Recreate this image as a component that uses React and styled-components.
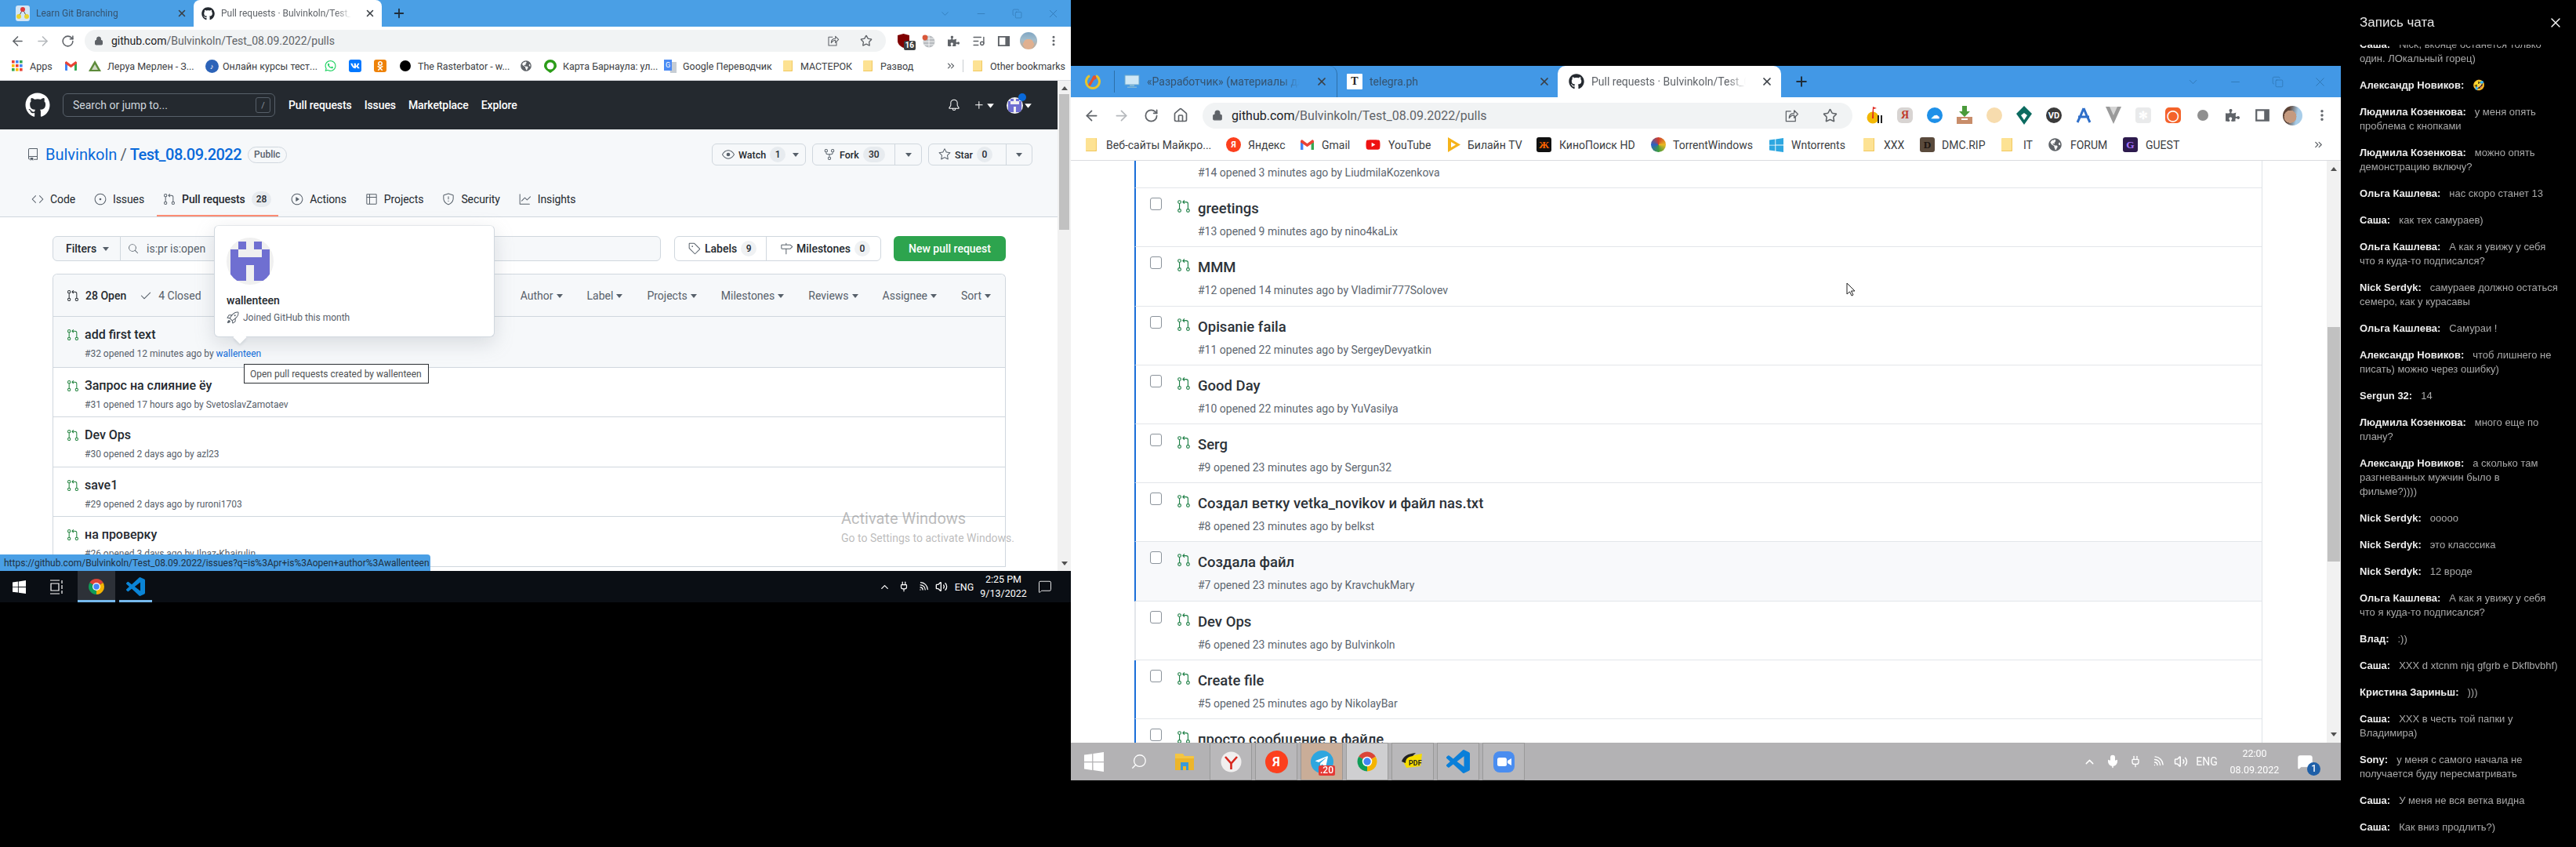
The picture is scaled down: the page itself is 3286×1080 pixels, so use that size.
import React from "react";
import styled, { createGlobalStyle } from "styled-components";
import {
  GoGitPullRequest, GoCode, GoIssueOpened, GoPlay, GoTable, GoShield, GoGraph, GoEye,
  GoRepoForked, GoStar, GoRepo, GoBell, GoPlus, GoSearch, GoTag, GoMilestone, GoCheck,
  GoRocket,
} from "react-icons/go";
import { FaGithub as GoMarkGithub, FaWhatsapp, FaVk, FaOdnoklassniki, FaYoutube, FaTelegramPlane, FaPuzzlePiece, FaGlobeAmericas } from "react-icons/fa";
import {
  ArrowLeft, ArrowRight, RotateCw, House, Lock, Star, EllipsisVertical, X, Plus, Minus, ChevronDown,
  ChevronUp, Copy, Wifi, Volume2, Mic, Plug, MessageSquare, Search, ListMusic, ChevronsRight,
} from "lucide-react";

const SANS = `Roboto, "Liberation Sans", sans-serif`;

const Global = createGlobalStyle`
  html, body { margin: 0; padding: 0; background: #000; }
  body { font-family: ${SANS}; width: 3286px; height: 1080px; overflow: hidden; }
  * { box-sizing: border-box; }
`;

const GoTriangleDown = ({ size = 12, color = "currentColor", style }) => (
  <svg width={size} height={size} viewBox="0 0 12 12" style={style}><path d="M2 4h8L6 9z" fill={color} /></svg>
);

/* ---------- page shell ---------- */
const Screen = styled.div`
  display: flex; width: 3286px; height: 1080px; background: #000; overflow: hidden;
`;
const LeftDesktop = styled.div`
  width: 1366px; height: 768px; display: flex; flex-direction: column; flex: none;
`;
const RightColumn = styled.div`
  width: 1620px; flex: none; padding-top: 84px; height: 995px;
`;
const RightDesktop = styled.div`
  height: 911px; display: flex; flex-direction: column; filter: blur(0.45px);
`;

/* ---------- chrome ---------- */
const TabStrip = styled.div`
  display: flex; align-items: stretch; flex: none; height: ${p => p.$big ? 40 : 34}px;
  background: ${p => p.$big ? "#4298e6" : "#4a9fe5"}; padding-left: ${p => p.$pad || 0}px;
`;
const Tab = styled.div`
  display: flex; align-items: center; flex: none; width: ${p => p.$w}px; padding-left: ${p => p.$pl}px;
  gap: ${p => p.$gap}px; font-size: ${p => p.$big ? 14 : 12}px; color: ${p => p.$active ? "#5f6368" : "#35536f"};
  background: ${p => p.$active ? "#fff" : "transparent"};
  border-radius: ${p => p.$big ? 10 : 8}px ${p => p.$big ? 10 : 8}px 0 0;
  border-right: ${p => p.$sep ? "1px solid #2d6fa8" : "none"};
`;
const TabTitle = styled.span`
  flex: 1; min-width: 0; white-space: nowrap; overflow: hidden;
  -webkit-mask-image: linear-gradient(90deg, #000 88%, transparent);
  mask-image: linear-gradient(90deg, #000 88%, transparent);
`;
const TabClose = styled.span`
  flex: none; width: ${p => p.$w}px; display: flex; justify-content: center; color: #3a3f45;
`;
const NewTab = styled.span`
  flex: none; width: ${p => p.$w}px; margin-left: ${p => p.$ml}px; display: flex; align-items: center; justify-content: center; color: #1f2d3a;
`;
const AppMark = styled.span`
  flex: none; width: 56px; display: flex; align-items: center; justify-content: center; border-right: 1px solid #2d6fa8; margin: 6px 0;
`;
const Controls = styled.div`
  margin-left: auto; display: flex;
`;
const Control = styled.span`
  width: ${p => p.$w}px; display: flex; align-items: center; justify-content: center; color: #2a6ea8;
`;
const Toolbar = styled.div`
  display: flex; align-items: center; flex: none; background: #fff; height: ${p => p.$big ? 41 : 32}px;
  padding-left: ${p => p.$big ? 7 : 6}px; padding-top: ${p => p.$big ? 5 : 4}px;
`;
const ToolButton = styled.span`
  flex: none; width: ${p => p.$big ? 38 : 32}px; height: 100%; display: flex; align-items: center; justify-content: center;
  color: ${p => p.$dim ? "#b5b8bc" : "#5f6368"}; position: relative;
`;
const Omnibox = styled.div`
  flex: none; width: ${p => p.$w}px; margin: 0 ${p => p.$mr}px 0 ${p => p.$ml}px; height: ${p => p.$big ? 33 : 28}px;
  border-radius: 17px; background: #f1f3f4; display: flex; align-items: center; padding: 0 ${p => p.$big ? 10 : 9}px 0 ${p => p.$big ? 12 : 12}px;
  color: #5f6368; font-size: ${p => p.$big ? 16 : 14}px; gap: ${p => p.$big ? 11 : 10}px;
`;
const Url = styled.span`
  flex: 1; white-space: nowrap; color: #5f6368; b { font-weight: 400; color: #202124; }
`;
const OmniTool = styled.span`
  flex: none; width: ${p => p.$big ? 38 : 32}px; display: flex; justify-content: center; color: #5f6368;
`;
const Bookmarks = styled.div`
  display: flex; align-items: center; flex: none; background: #fff; height: ${p => p.$big ? 40 : 37}px;
  border-bottom: 1px solid #dadce0; font-size: ${p => p.$big ? 14 : 12.5}px; color: #3c4043; white-space: nowrap;
`;
const Bookmark = styled.div`
  display: flex; align-items: center; flex: none; margin-left: ${p => p.$ml}px;
`;
const BookmarkIcon = styled.span`
  flex: none; width: ${p => p.$w}px; display: flex; align-items: center; justify-content: center;
`;
const BookmarkLabel = styled.span`
  flex: none; width: ${p => p.$w}px; margin-left: ${p => p.$ml}px; overflow: visible;
`;
const Folder = styled.span`
  display: block; width: ${p => p.$big ? 14 : 12}px; height: ${p => p.$big ? 17 : 14}px; background: #fde293;
  border-radius: 1px; box-shadow: inset -1px -1px 0 #f1c85f;
`;
const BarSep = styled.span`
  flex: none; width: 1px; height: 16px; background: #c8ccd0; margin-left: 8px;
`;
const Badge16 = styled.span`
  position: absolute; right: 0; bottom: 2px; background: #3c4043; color: #fff; font-size: 10px; font-weight: 700; padding: 0 2px; border-radius: 2px; line-height: 12px;
`;
const Dot = styled.span`
  width: ${p => p.$s}px; height: ${p => p.$s}px; border-radius: 50%; background: ${p => p.$c};
  display: flex; align-items: center; justify-content: center; color: #fff; font-size: ${p => p.$s * .55}px; font-weight: 700;
`;
const SquareMark = styled.span`
  display: flex; align-items: center; justify-content: center; width: ${p => p.$s}px; height: ${p => p.$s}px; border-radius: ${p => p.$r || 3}px;
  background: ${p => p.$c}; color: ${p => p.$fg || "#fff"}; font-size: ${p => p.$s * .7}px; font-weight: 700; font-family: "Liberation Serif", serif;
`;
const FaceAvatar = styled.span`
  display: block; width: ${p => p.$s}px; height: ${p => p.$s}px; border-radius: 50%;
  background: ${p => p.$anime
    ? "radial-gradient(circle at 50% 70%, #e0b090 0 35%, transparent 36%), linear-gradient(#7fa6c4, #a3bccb 45%, #c9a78a)"
    : "radial-gradient(circle at 38% 55%, #c59a7f 0 38%, transparent 39%), linear-gradient(100deg, #5c4336 30%, #a8cde9 70%)"};
`;

/* ---------- left viewport ---------- */
const Viewport = styled.div`
  flex: 1; min-height: 0; display: flex; position: relative; background: #fff; overflow: hidden;
`;
const Doc = styled.div`
  flex: 1; min-width: 0; overflow: hidden; color: #24292f;
`;
const Scrollbar = styled.div`
  flex: none; width: ${p => p.$w}px; background: #f1f1f1; display: flex; flex-direction: column; align-items: center;
  padding-top: ${p => p.$gap}px; position: relative;
`;
const ScrollThumb = styled.div`
  width: ${p => p.$w}px; height: ${p => p.$h}px; background: #c1c1c1; margin-top: ${p => p.$top}px;
`;
const ScrollUp = styled.span`
  position: absolute; top: ${p => p.$t}px; border-left: 4px solid transparent; border-right: 4px solid transparent; border-bottom: 5px solid #505050;
`;
const ScrollDown = styled.span`
  position: absolute; bottom: ${p => p.$b}px; border-left: 4px solid transparent; border-right: 4px solid transparent; border-top: 5px solid #505050;
`;
const GhHeader = styled.header`
  height: 62px; background: #24292f; display: flex; align-items: center; padding: 0 31px 0 32px; color: #fff; flex: none;
`;
const GhSearch = styled.div`
  width: 271px; height: 30px; margin-left: 16px; border: 1px solid #57606a; border-radius: 6px; display: flex; align-items: center;
  padding: 0 5px 0 12px; font-size: 14px; color: #d0d7de; justify-content: space-between;
`;
const Slash = styled.span`
  width: 19px; height: 20px; border: 1px solid #57606a; border-radius: 3px; display: flex; align-items: center; justify-content: center; font-size: 11px; color: #8c959f;
`;
const GhNav = styled.nav`
  display: flex; gap: 16px; margin-left: 17px; font-size: 14px; font-weight: 500; color: #fff; letter-spacing: -0.1px;
`;
const GhRight = styled.div`
  margin-left: auto; display: flex; align-items: center;
`;
const GhAvatarWrap = styled.span`
  position: relative; margin-left: 14px; display: flex; align-items: center; gap: 0;
`;
const Notify = styled.span`
  position: absolute; left: 15px; top: -5px; width: 10px; height: 10px; border-radius: 50%; background: #0969da;
`;
const RepoHead = styled.div`
  height: 112px; background: #f6f8fa; border-bottom: 1px solid #d0d7de; padding: 18px 32px 0 34px; display: flex; flex-direction: column; justify-content: space-between;
`;
const RepoTop = styled.div`
  display: flex; align-items: center; height: 28px;
`;
const RepoName = styled.div`
  display: flex; align-items: center; font-size: 20px; color: #0969da; margin-left: 8px; gap: 4px;
  b { font-weight: 500; letter-spacing: -0.5px; } i { font-style: normal; color: #57606a; }
`;
const PublicPill = styled.span`
  margin-left: 8px; height: 21px; padding: 0 7px; border: 1px solid #d0d7de; border-radius: 11px; font-size: 12px; color: #57606a; display: flex; align-items: center; font-weight: 500;
`;
const RepoActions = styled.div`
  margin-left: auto; display: flex; gap: 8px;
`;
const ActionButton = styled.div`
  display: flex; align-items: center; width: ${p => p.$w}px; height: 28px; border: 1px solid #d0d7de; border-radius: 6px; background: #f6f8fa;
  font-size: 12.5px; font-weight: 500; color: #24292f; overflow: hidden;
`;
const ActionMain = styled.span`
  flex: 1; display: flex; align-items: center; gap: 5px; padding-left: ${p => p.$pl}px; height: 100%;
`;
const ActionCaret = styled.span`
  flex: none; width: ${p => p.$w}px; height: 100%; display: flex; align-items: center; justify-content: center; border-left: ${p => p.$line ? "1px solid #d0d7de" : "none"}; color: #57606a;
`;
const Counter = styled.span`
  display: inline-flex; align-items: center; justify-content: center; min-width: ${p => p.$w || 20}px; height: 20px; padding: 0 6px; border-radius: 10px;
  background: ${p => p.$bg || "rgba(175,184,193,.2)"}; font-size: 12px; font-weight: 500; color: #24292f;
`;
const RepoTabs = styled.div`
  display: flex; gap: 8px; margin-left: -2px; height: 47px;
`;
const RepoTab = styled.div`
  display: flex; align-items: center; gap: 8px; padding: 4px ${p => p.$active ? 9 : 8}px 0 8px; font-size: 14px; color: #24292f; height: 47px;
  font-weight: ${p => p.$active ? 500 : 400}; margin-bottom: -1px; letter-spacing: -0.1px;
  border-bottom: 2px solid ${p => p.$active ? "#fd8c73" : "transparent"};
  svg { color: #57606a; }
`;
const Main = styled.div`
  padding: 24px 66px 0 67px;
`;
const FilterRow = styled.div`
  display: flex; height: 32px;
`;
const FilterBtn = styled.div`
  flex: none; width: 87px; display: flex; align-items: center; gap: 6px; padding-left: 16px; background: #f6f8fa; border: 1px solid #d0d7de; border-radius: 6px 0 0 6px;
  font-size: 14px; font-weight: 500;
`;
const FilterInput = styled.div`
  flex: none; width: 690px; margin-left: -1px; display: flex; align-items: center; gap: 10px; padding-left: 9px; background: #f6f8fa; border: 1px solid #d0d7de; border-radius: 0 6px 6px 0;
  font-size: 14px; color: #57606a;
`;
const LabelGroup = styled.div`
  flex: none; width: 264px; margin-left: 17px; display: flex; border: 1px solid #d0d7de; border-radius: 6px; font-size: 14px; font-weight: 500;
`;
const LabelPart = styled.div`
  display: flex; align-items: center; gap: 5px; padding-left: ${p => p.$pl}px; width: ${p => p.$w}px; border-left: ${p => p.$line ? "1px solid #d0d7de" : "none"};
  svg { color: #57606a; }
`;
const GreenButton = styled.div`
  flex: none; width: 143px; margin-left: 16px; background: #2da44e; border-radius: 6px; color: #fff; font-size: 14px; font-weight: 500; display: flex; align-items: center; justify-content: center;
`;
const IssueBox = styled.div`
  margin-top: 16px; border: 1px solid #d0d7de; border-bottom: 0; border-radius: 6px 6px 0 0;
`;
const IssueHead = styled.div`
  height: 54px; background: #f6f8fa; border-bottom: 1px solid #d0d7de; display: flex; align-items: center; padding: 0 16px 0 17px; font-size: 14px; border-radius: 6px 6px 0 0;
`;
const StateLink = styled.span`
  display: flex; align-items: center; gap: 8px; margin-right: 17px; font-weight: ${p => p.$on ? 500 : 400}; color: ${p => p.$on ? "#24292f" : "#57606a"};
`;
const HeadFilters = styled.div`
  margin-left: auto; display: flex; gap: 29px; color: #57606a; font-size: 14px;
`;
const HeadFilter = styled.span`
  display: flex; align-items: center; gap: 2px;
`;
const Row = styled.div`
  height: ${p => p.$h || 64}px; background: ${p => p.$hover ? "#f6f8fa" : "#fff"}; border-bottom: 1px solid #d0d7de; display: flex; padding: 12px 0 0 17px; gap: 7px;
  svg { color: #1a7f37; margin-top: 3px; flex: none; }
`;
const RowBody = styled.div`
  display: flex; flex-direction: column;
`;
const RowTitle = styled.div`
  font-size: 16px; font-weight: 500; line-height: 22px; color: #24292f;
`;
const RowMeta = styled.div`
  font-size: 12px; line-height: 16px; margin-top: 5px; color: #57606a; a { color: #0969da; }
`;

/* overlays */
const HoverCard = styled.div`
  position: absolute; left: 273px; top: 184px; width: 358px; height: 143px; background: #fff; border: 1px solid #d0d7de; border-top-color: #e4e7ea; border-radius: 6px;
  box-shadow: 0 8px 24px rgba(140,149,159,.28); padding: 15px 15px;
  &::after { content: ""; position: absolute; left: 26px; bottom: -7px; width: 12px; height: 12px; background: #fff; transform: rotate(45deg); box-shadow: 2px 2px 3px rgba(140,149,159,.2); }
`;
const Identicon = styled.div`
  width: 60px; height: 60px; border-radius: 50%; background: #f0f0f0; overflow: hidden; display: flex; align-items: center; justify-content: center;
`;
const CardName = styled.div`
  font-size: 14px; font-weight: 500; margin-top: 12px; color: #24292f; line-height: 16px;
`;
const CardLine = styled.div`
  display: flex; align-items: center; gap: 5px; font-size: 12px; color: #57606a; margin-top: 6px; svg { color: #57606a; }
`;
const Tooltip = styled.div`
  position: absolute; left: 311px; top: 361px; width: 236px; height: 25px; background: #fff; border: 1px solid #2b2f33; font-size: 12px; color: #4c4f52; display: flex; align-items: center; padding-left: 7px; white-space: nowrap;
`;
const StatusBar = styled.div`
  position: absolute; left: 0; bottom: 0; width: 549px; height: 21px; background: #4a9fe5; border-radius: 0 4px 0 0; font-size: 12px; color: #20303f; display: flex; align-items: center; padding-left: 5px; white-space: nowrap;
`;
const Activate = styled.div`
  position: absolute; left: 1073px; top: 543px; color: rgba(120,120,120,.5); white-space: nowrap;
  div:first-child { font-size: 20px; line-height: 30px; } div:last-child { font-size: 14px; line-height: 18px; margin-top: 1px; }
`;

/* taskbars */
const Taskbar = styled.div`
  flex: none; display: flex; align-items: stretch; color: #fff; height: ${p => p.$big ? 48 : 40}px; background: ${p => p.$big ? "#b3b2b4" : "#0a0e14"};
`;
const TaskSlot = styled.span`
  flex: none; width: ${p => p.$w}px; margin-left: ${p => p.$ml || 0}px; display: flex; align-items: center; justify-content: center; position: relative;
  background: ${p => p.$bg || "transparent"}; border: ${p => p.$frame ? "1px solid rgba(150,150,150,.9)" : "none"};
  border-bottom: ${p => p.$line ? "3px solid #76b9ed" : p.$frame ? "1px solid rgba(150,150,150,.9)" : "none"};
  padding-top: ${p => p.$line ? "3px" : 0};
`;
const TrayRight = styled.div`
  margin-left: auto; display: flex; align-items: stretch; padding-right: ${p => p.$pr}px;
`;
const TrayItem = styled.span`
  flex: none; width: ${p => p.$w}px; display: flex; align-items: center; justify-content: center; position: relative; font-size: ${p => p.$fs || 13}px;
`;
const Clock = styled.span`
  display: flex; flex-direction: column; align-items: center; justify-content: center; line-height: ${p => p.$lh}px; font-size: 12.5px;
`;
const CountBadge = styled.span`
  position: absolute; right: ${p => p.$r}px; bottom: ${p => p.$b}px; background: ${p => p.$c}; color: #fff; font-size: 12px; line-height: 13px; padding: ${p => p.$round ? "2px 5px" : "0 2px"};
  border-radius: ${p => p.$round ? "50%" : "2px"}; font-weight: 500;
`;

/* right doc */
const BigDoc = styled.div`
  flex: 1; min-width: 0; overflow: hidden; background: #fff; padding-left: 81px; position: relative;
`;
const BigBox = styled.div`
  width: 1439px; border-right: 1px solid #dfe3e8;
  margin-top: -40px;
`;
const BigRow = styled.div`
  height: 75.2px; border-bottom: 1.5px solid #e3e6ea; border-left: 2px solid ${p => p.$noline ? "#e3e6ea" : "#1a6ed8"};
  background: ${p => p.$hover ? "#f8f9fb" : "#fff"}; display: flex; padding: 12px 0 0 18px;
`;
const CheckBox = styled.span`
  flex: none; width: 15px; height: 16px; border: 1.5px solid #8b939b; border-radius: 3px; background: #fff;
`;
const BigIcon = styled.span`
  flex: none; margin-left: 19px; color: #1d7f45; display: flex; width: 27px; padding-top: 2px;
`;
const BigTitle = styled.div`
  font-size: 18.5px; font-weight: 500; line-height: 26px; color: #2c3238; margin-top: 1px;
`;
const BigMeta = styled.div`
  font-size: 14px; line-height: 18px; margin-top: 7px; color: #5d666f;
`;
const Pointer = styled.svg`
  position: absolute; left: 989px; top: 155px;
`;

/* chat */
const Chat = styled.aside`
  flex: none; width: 300px; height: 1080px; background: #000; display: flex; flex-direction: column; filter: blur(0.25px);
`;
const ChatHead = styled.div`
  flex: none; height: 57px; display: flex; align-items: flex-start; justify-content: space-between; padding: 19px 16px 0 24px; font-size: 17px; color: #e9e9e9; font-family: "Liberation Sans", sans-serif;
`;
const ChatList = styled.div`
  flex: 1; min-height: 0; overflow: hidden; padding-left: 24px; width: 290px;
`;
const ChatClip = styled.div`
  margin-top: -9px; display: flex; flex-direction: column; gap: 16px;
`;
const Message = styled.div`
  font-family: "Liberation Sans", sans-serif; font-size: 13px; line-height: 18px; color: #a9a9a9; flex: none;
  b { color: #eeeeee; font-weight: 700; margin-right: 11px; }
`;

/* ---------- small drawings ---------- */
const ChromeIcon = ({ s }) => (
  <svg width={s} height={s} viewBox="0 0 48 48">
    <path fill="#db4437" d="M24 24L6.7 14A20 20 0 0 1 41.3 14Z" />
    <path fill="#f4b400" d="M24 24L41.3 14A20 20 0 0 1 24 44Z" />
    <path fill="#0f9d58" d="M24 24L24 44A20 20 0 0 1 6.7 14Z" />
    <circle cx="24" cy="24" r="10" fill="#fff" />
    <circle cx="24" cy="24" r="7.5" fill="#4285f4" />
  </svg>
);
const VsCode = ({ s, c = "#0a84d6" }) => (
  <svg width={s} height={s} viewBox="0 0 24 24" fill={c}>
    <path d="M23.15 2.587L18.21.21a1.494 1.494 0 0 0-1.705.29l-9.46 8.63-4.12-3.128a.999.999 0 0 0-1.276.057L.327 7.261A1 1 0 0 0 .326 8.74L3.899 12 .326 15.26a1 1 0 0 0 .001 1.479L1.65 17.94a.999.999 0 0 0 1.276.057l4.12-3.128 9.46 8.63a1.492 1.492 0 0 0 1.704.29l4.942-2.377A1.5 1.5 0 0 0 24 20.06V3.939a1.5 1.5 0 0 0-.85-1.352zm-5.146 14.861L10.826 12l7.178-5.448v10.896z" />
  </svg>
);
const WinLogo = ({ s }) => (
  <svg width={s} height={s} viewBox="0 0 24 24" fill="#fff">
    <path d="M0 3.449L9.75 2.1v9.451H0m10.949-9.602L24 0v11.4H10.949M0 12.6h9.75v9.451L0 20.699M10.949 12.6H24V24l-12.9-1.801" />
  </svg>
);
const TaskView = () => (
  <svg width="17" height="19" viewBox="0 0 17 19" fill="none" stroke="#fff" strokeWidth="1.2">
    <path d="M0 1h12M0 18h12M1 5h10v9H1zM15 1v4M15 7v5M15 14v4" />
  </svg>
);
const ShareIcon = ({ s }) => (
  <svg width={s} height={s} viewBox="0 0 24 24" fill="none" stroke="currentColor" strokeWidth="1.6" strokeLinejoin="round">
    <path d="M11 5H3v16h15v-7" />
    <path d="M8 16c0-5 3-8 8-8V3.500l6 6-6 6V11c-4 0-6 2-8 5z" />
  </svg>
);
const SidePanel = ({ s }) => (
  <svg width={s} height={s} viewBox="0 0 18 18">
    <path fillRule="evenodd" fill="#5f6368" d="M1 2h16v14H1zM3 4v10h8V4z" />
  </svg>
);
const GitTree = () => (
  <svg width="18" height="20" viewBox="0 0 18 20">
    <rect x="0" y="0" width="18" height="20" rx="3" fill="#d3e6f6" />
    <path d="M9 5L4 14M9 5l5 9" stroke="#555" />
    <circle cx="9" cy="5" r="3" fill="#e03a3a" /><circle cx="4" cy="14" r="3" fill="#e8d22f" /><circle cx="14" cy="14" r="3" fill="#e8d22f" />
  </svg>
);
const AppsGrid = () => (
  <svg width="14" height="14" viewBox="0 0 14 14">
    {[["#ea4335", "#4285f4", "#34a853"], ["#fbbc04", "#ea4335", "#4285f4"], ["#34a853", "#fbbc04", "#ea4335"]].map((r, y) =>
      r.map((c, x) => <rect key={x + "" + y} x={x * 5} y={y * 5} width="3.6" height="3.6" fill={c} />))}
  </svg>
);
const GmailM = ({ s }) => (
  <svg width={s} height={s * .8} viewBox="0 0 20 16">
    <path fill="#4285f4" d="M0 2h4v14H1a1 1 0 0 1-1-1z" /><path fill="#34a853" d="M16 2h4v13a1 1 0 0 1-1 1h-3z" />
    <path fill="#ea4335" d="M0 2l2-2 8 6 8-6 2 2v2l-10 7L0 4z" />
  </svg>
);
const LeroyHouse = () => (
  <svg width="16" height="14" viewBox="0 0 16 14"><path fill="#5d8a3a" d="M8 0l8 14H0z" /><path fill="#cfd8c4" d="M8 5l4 7H4z" /></svg>
);
const Pin = () => (
  <svg width="16" height="17" viewBox="0 0 16 17"><path fill="#2b9c18" d="M8 0a8 8 0 0 1 8 8c0 4-5 7-8 9-3-2-8-5-8-9a8 8 0 0 1 8-8z" /><circle cx="8" cy="8" r="4.5" fill="#fff" /></svg>
);
const GTranslate = () => (
  <svg width="16" height="17" viewBox="0 0 16 17"><path fill="#c7cdd4" d="M6 3h10v14H8z" /><path fill="#4a8af4" d="M0 0h10v14H0z" /><text x="2" y="10" fontSize="9" fill="#fff" fontFamily="Roboto">G</text></svg>
);
const UBlock = () => (
  <svg width="15" height="18" viewBox="0 0 15 18"><path fill="#800000" d="M7.5 0L15 2v7c0 4-3 7-7.500 9C3 16 0 13 0 9V2z" /></svg>
);
const GreyGlobe = () => (
  <svg width="17" height="17" viewBox="0 0 17 17">
    <circle cx="9" cy="9" r="7.500" fill="#b8bcc0" /><path d="M9 1.500v15M1.500 9h15M3 5h12M3 13h12" stroke="#fff" strokeWidth=".8" /><circle cx="4" cy="4" r="3.400" fill="#d9583a" />
  </svg>
);
const TabMonitor = () => (
  <svg width="20" height="18" viewBox="0 0 20 18"><rect x="1" y="1" width="18" height="12" fill="#cfe8f6" stroke="#6aa7cc" /><path d="M7 13h6v2H7zM4 15.500h12V17H4z" fill="#7fb6d6" /></svg>
);
const RingMark = () => (
  <svg width="20" height="22" viewBox="0 0 20 22" fill="none">
    <path d="M6 3.500A8.500 8.500 0 1 0 14 3.500" stroke="#e8c52a" strokeWidth="3" />
    <path d="M6 15L12 5" stroke="#e5532d" strokeWidth="3.400" strokeLinecap="round" />
    <circle cx="12" cy="6" r="2.500" fill="#e5532d" />
  </svg>
);
const MusicFlame = () => (
  <svg width="22" height="24" viewBox="0 0 22 24"><circle cx="8" cy="15" r="7.500" fill="#f2b705" /><path d="M8 1l5 2-4 1v12H7z" fill="#e0291f" /><path d="M14 12h2v10h-2zM18 12h2v10h-2z" fill="#222" /></svg>
);
const Teal = () => (
  <svg width="20" height="24" viewBox="0 0 20 24"><path fill="#0c6b60" fillRule="evenodd" d="M10 0l10 10-10 14L0 10zM10 9L6 12l4 6 4-6z" /></svg>
);
const Ribbon = () => (
  <svg width="20" height="22" viewBox="0 0 20 22" fill="none" stroke="#2f6fc9" strokeWidth="3"><path d="M10 2c-3 8-6 14-8 18M10 2c3 8 6 14 8 18M3 13h14" /></svg>
);
const Vee = () => (
  <svg width="20" height="22" viewBox="0 0 20 22"><path fill="#9a9a9a" d="M0 0h20L10 22z" /><path fill="#d5d5d5" d="M5 0h10l-5 11z" /></svg>
);
const BoxArrow = () => (
  <svg width="22" height="24" viewBox="0 0 22 24"><path fill="#4a9a3a" d="M8 0h6v7h4l-7 7-7-7h4z" /><path fill="#c88d6a" d="M1 14h20v9H1z" /><path fill="#fff" d="M7 16h8v2H7z" /></svg>
);
const Pot = () => (
  <svg width="28" height="24" viewBox="0 0 28 24">
    <path fill="#f6dc00" d="M6 6l20-4-2 16-18 2-4-8z" /><path fill="#222" d="M0 12C2 5 8 2 18 1l-4 4C8 6 5 8 5 14z" />
    <text x="9" y="17" fontSize="9" fontWeight="700" fill="#222" fontFamily="Roboto">PDF</text>
  </svg>
);
const ZoomTile = () => (
  <svg width="27" height="27" viewBox="0 0 27 27">
    <rect width="27" height="27" rx="8" fill="#4a8df0" /><rect x="5" y="8" width="12" height="11" rx="2.500" fill="#fff" /><path d="M18 12l5-3v9l-5-3z" fill="#fff" />
  </svg>
);
const FileExplorer = () => (
  <svg width="26" height="26" viewBox="0 0 26 26"><path fill="#f4c542" d="M1 3h10l2 3h12v5H1z" /><path fill="#ecb52a" d="M1 9h24v15H1z" /><path fill="#3a9ad9" d="M8 14h10v10h-3v-5h-4v5H8z" /></svg>
);
const YLogo = () => (
  <svg width="27" height="27" viewBox="0 0 27 27"><circle cx="13.500" cy="13.500" r="13" fill="#f1efef" /><path d="M6 7l7.500 8.500V23M21 7l-7.500 8.500" stroke="#d8261d" strokeWidth="2.600" fill="none" /></svg>
);
const IdenticonArt = () => (
  <svg width="50" height="50" viewBox="0 0 5 5" fill="#6f6fd1" shapeRendering="crispEdges">
    <path d="M1 0h1v1H1zM3 0h1v1H3zM0 1h1v1H0zM4 1h1v1H4zM0 2h5v1H0zM0 3h2v2H0zM3 3h2v2H3z" />
  </svg>
);

/* ---------- data ---------- */
const leftMarks = [
  [15, 14, <AppsGrid />, 38, 65, "Apps"],
  [82, 16, <GmailM s={15} />, 0, 0, ""],
  [113, 16, <LeroyHouse />, 137, 243, "Леруа Мерлен - З..."],
  [260, 20, <Dot $s={17} $c="#2c63b8">♪</Dot>, 284, 396, "Онлайн курсы тест..."],
  [414, 15, <FaWhatsapp size={16} color="#25d366" />, 0, 0, ""],
  [445, 16, <SquareMark $s={16} $c="#0077ff"><FaVk size={12} /></SquareMark>, 0, 0, ""],
  [477, 16, <SquareMark $s={16} $c="#ee8208"><FaOdnoklassniki size={12} /></SquareMark>, 0, 0, ""],
  [510, 14, <Dot $s={14} $c="#000" />, 533, 645, "The Rasterbator - w..."],
  [663, 15, <FaGlobeAmericas size={14} color="#5f6368" />, 0, 0, ""],
  [694, 16, <Pin />, 718, 831, "Карта Барнаула: ул..."],
  [847, 16, <GTranslate />, 871, 981, "Google Переводчик"],
  [999, 12, <Folder />, 1021, 1082, "МАСТЕРОК"],
  [1101, 12, <Folder />, 1123, 1161, "Развод"],
];
const rightMarks = [
  [1385, 14, <Folder $big />, 1411, 1545, "Веб-сайты Майкро..."],
  [1564, 19, <Dot $s={19} $c="#fc3f1d">Я</Dot>, 1592, 1638, "Яндекс"],
  [1659, 17, <GmailM s={17} />, 1686, 1722, "Gmail"],
  [1742, 19, <FaYoutube size={19} color="#ee1111" />, 1771, 1824, "YouTube"],
  [1847, 16, <svg width="16" height="19" viewBox="0 0 16 19"><path fill="#f5b31a" d="M0 0l16 9.500L0 19zM4 6v7l6-3.500z" fillRule="evenodd" /></svg>, 1872, 1940, "Билайн TV"],
  [1960, 19, <SquareMark $s={19} $c="#111" $fg="#f60">Ж</SquareMark>, 1989, 2086, "КиноПоиск HD"],
  [2106, 19, <Dot $s={19} $c="conic-gradient(#d03b2c, #e9b820, #3d9b3f, #2a62c4, #d03b2c)" />, 2134, 2237, "TorrentWindows"],
  [2257, 18, <svg width="18" height="18" viewBox="0 0 24 24" fill="#2ea7e0"><path d="M0 3.449L9.75 2.1v9.451H0m10.949-9.602L24 0v11.4H10.949M0 12.6h9.75v9.451L0 20.699M10.949 12.6H24V24l-12.9-1.801" /></svg>, 2285, 2356, "Wntorrents"],
  [2377, 14, <Folder $big />, 2403, 2429, "XXX"],
  [2449, 19, <SquareMark $s={19} $c="#5a4a3c" $fg="#1d1713">D</SquareMark>, 2477, 2532, "DMC.RIP"],
  [2553, 14, <Folder $big />, 2581, 2592, "IT"],
  [2612, 18, <FaGlobeAmericas size={17} color="#5f6368" />, 2641, 2688, "FORUM"],
  [2708, 19, <SquareMark $s={19} $c="#2d1a4d" $fg="#a774ff">G</SquareMark>, 2737, 2779, "GUEST"],
];

const leftRows = [
  ["add first text", "#32 opened 12 minutes ago by ", "wallenteen", true, 65],
  ["Запрос на слияние ёу", "#31 opened 17 hours ago by SvetoslavZamotaev", "", false, 63],
  ["Dev Ops", "#30 opened 2 days ago by azl23", "", false, 64],
  ["save1", "#29 opened 2 days ago by ruroni1703", "", false, 63],
  ["на проверку", "#26 opened 3 days ago by Ilnaz-Khairulin", "", false, 64],
];
const rightRows = [
  ["", "#14 opened 3 minutes ago by LiudmilaKozenkova"],
  ["greetings", "#13 opened 9 minutes ago by nino4kaLix"],
  ["MMM", "#12 opened 14 minutes ago by Vladimir777Solovev"],
  ["Opisanie faila", "#11 opened 22 minutes ago by SergeyDevyatkin"],
  ["Good Day", "#10 opened 22 minutes ago by YuVasilya"],
  ["Serg", "#9 opened 23 minutes ago by Sergun32"],
  ["Создал ветку vetka_novikov и файл nas.txt", "#8 opened 23 minutes ago by belkst"],
  ["Создала файл", "#7 opened 23 minutes ago by KravchukMary", "hover"],
  ["Dev Ops", "#6 opened 23 minutes ago by Bulvinkoln", "noline"],
  ["Create file", "#5 opened 25 minutes ago by NikolayBar"],
  ["просто сообщение в файле", "#4 opened 26 minutes ago by Olga"],
];
const chat = [
  ["Саша:", <>Nick, вконце останется только<br />один. ЛОкальный горец)</>],
  ["Александр Новиков:", "🤣"],
  ["Людмила Козенкова:", <>у меня опять<br />проблема с кнопками</>],
  ["Людмила Козенкова:", <>можно опять<br />демонстрацию включу?</>],
  ["Ольга Кашлева:", "нас скоро станет 13"],
  ["Саша:", "как тех самураев)"],
  ["Ольга Кашлева:", <>А как я увижу у себя<br />что я куда-то подписался?</>],
  ["Nick Serdyk:", <>самураев должно остаться<br />семеро, как у курасавы</>],
  ["Ольга Кашлева:", "Самураи !"],
  ["Александр Новиков:", <>чтоб лишнего не<br />писать) можно через ошибку)</>],
  ["Sergun 32:", "14"],
  ["Людмила Козенкова:", <>много еще по<br />плану?</>],
  ["Александр Новиков:", <>а сколько там<br />разгневанных мужчин было в<br />фильме?))))</>],
  ["Nick Serdyk:", "ооооо"],
  ["Nick Serdyk:", "это класссика"],
  ["Nick Serdyk:", "12 вроде"],
  ["Ольга Кашлева:", <>А как я увижу у себя<br />что я куда-то подписался?</>],
  ["Влад:", ":))"],
  ["Саша:", "XXX d xtcnm njq gfgrb e Dkflbvbhf)"],
  ["Кристина Зариньш:", ")))"],
  ["Саша:", <>XXX в честь той папки у<br />Владимира)</>],
  ["Sony:", <>у меня с самого начала не<br />получается буду пересматривать</>],
  ["Саша:", "У меня не вся ветка видна"],
  ["Саша:", "Как вниз продлить?)"],
];

/* ---------- parts ---------- */
function BookmarkRow({ items, origin, big, tail }) {
  let end = origin;
  return (
    <Bookmarks $big={big}>
      {items.map(([ix, iw, icon, lx, lxe, label], i) => {
        const ml = ix - end;
        end = label ? lxe : ix + iw;
        return (
          <Bookmark key={i} $ml={ml}>
            <BookmarkIcon $w={iw}>{icon}</BookmarkIcon>
            {label && <BookmarkLabel $ml={lx - ix - iw} $w={lxe - lx}>{label}</BookmarkLabel>}
          </Bookmark>
        );
      })}
      {tail}
    </Bookmarks>
  );
}

function WindowControls({ w, s }) {
  return (
    <Controls>
      <Control $w={w}><ChevronDown size={s} strokeWidth={1} /></Control>
      <Control $w={w}><Minus size={s} strokeWidth={1} /></Control>
      <Control $w={w}><Copy size={s - 2} strokeWidth={1} /></Control>
      <Control $w={w}><X size={s + 2} strokeWidth={1} /></Control>
    </Controls>
  );
}

const PrIcon = ({ s = 16 }) => <GoGitPullRequest size={s} />;
const Caret = ({ s = 10 }) => <GoTriangleDown size={s + 2} color="currentColor" />;

function LeftWindow() {
  return (
    <LeftDesktop>
      <TabStrip>
        <Tab $w={247} $pl={20} $gap={8}>
          <GitTree />
          <TabTitle>Learn Git Branching</TabTitle>
          <TabClose $w={30}><X size={14} strokeWidth={2.6} /></TabClose>
        </Tab>
        <Tab $w={240} $pl={10} $gap={8} $active>
          <GoMarkGithub size={17} color="#24292f" />
          <TabTitle>Pull requests · Bulvinkoln/Test_08.09.2022</TabTitle>
          <TabClose $w={31}><X size={14} strokeWidth={2.6} /></TabClose>
        </Tab>
        <NewTab $w={28} $ml={8}><Plus size={18} strokeWidth={2.4} /></NewTab>
        <WindowControls w={46} s={15} />
      </TabStrip>
      <Toolbar>
        <ToolButton><ArrowLeft size={19} strokeWidth={2} /></ToolButton>
        <ToolButton $dim><ArrowRight size={19} strokeWidth={2} /></ToolButton>
        <ToolButton><RotateCw size={17} strokeWidth={2.2} /></ToolButton>
        <Omnibox $w={1022} $ml={6} $mr={6}>
          <Lock size={12} fill="#5f6368" strokeWidth={2} />
          <Url><b>github.com</b>/Bulvinkoln/Test_08.09.2022/pulls</Url>
          <OmniTool><ShareIcon s={16} /></OmniTool>
          <OmniTool><Star size={16} strokeWidth={2} /></OmniTool>
        </Omnibox>
        <ToolButton><UBlock /><Badge16>16</Badge16></ToolButton>
        <ToolButton><GreyGlobe /></ToolButton>
        <ToolButton><FaPuzzlePiece size={15} /></ToolButton>
        <ToolButton><ListMusic size={17} /></ToolButton>
        <ToolButton><SidePanel s={17} /></ToolButton>
        <ToolButton><FaceAvatar $s={22} $anime /></ToolButton>
        <ToolButton><EllipsisVertical size={16} strokeWidth={2.6} /></ToolButton>
      </Toolbar>
      <BookmarkRow items={leftMarks} origin={0} tail={<>
        <ChevronsRight size={14} color="#5f6368" style={{ marginLeft: 45 }} />
        <BarSep />
        <Bookmark $ml={12}><BookmarkIcon $w={12}><Folder /></BookmarkIcon><BookmarkLabel $ml={10} $w={93}>Other bookmarks</BookmarkLabel></Bookmark>
      </>} />
      <Viewport>
        <Doc>
          <GhHeader>
            <GoMarkGithub size={32} />
            <GhSearch>Search or jump to...<Slash>/</Slash></GhSearch>
            <GhNav><span>Pull requests</span><span>Issues</span><span>Marketplace</span><span>Explore</span></GhNav>
            <GhRight>
              <GoBell size={16} />
              <GoPlus size={16} style={{ marginLeft: 16 }} />
              <GoTriangleDown size={13} />
              <GhAvatarWrap>
                <Identicon style={{ width: 21, height: 21 }}><svg width="17" height="17" viewBox="0 0 5 5" fill="#6f6fd1" shapeRendering="crispEdges"><path d="M1 0h1v1H1zM3 0h1v1H3zM0 1h1v1H0zM4 1h1v1H4zM0 2h5v1H0zM0 3h2v2H0zM3 3h2v2H3z" /></svg></Identicon>
                <Notify />
                <GoTriangleDown size={13} />
              </GhAvatarWrap>
            </GhRight>
          </GhHeader>
          <RepoHead>
            <RepoTop>
              <GoRepo size={16} color="#57606a" />
              <RepoName><span>Bulvinkoln</span><i>/</i><b>Test_08.09.2022</b></RepoName>
              <PublicPill>Public</PublicPill>
              <RepoActions>
                <ActionButton $w={120}>
                  <ActionMain $pl={12}><GoEye size={16} color="#57606a" />Watch<Counter>1</Counter></ActionMain>
                  <ActionCaret $w={26}><Caret /></ActionCaret>
                </ActionButton>
                <ActionButton $w={140}>
                  <ActionMain $pl={13}><GoRepoForked size={16} color="#57606a" />Fork<Counter $w={28}>30</Counter></ActionMain>
                  <ActionCaret $w={34} $line><Caret /></ActionCaret>
                </ActionButton>
                <ActionButton $w={133}>
                  <ActionMain $pl={12}><GoStar size={16} color="#57606a" />Star<Counter>0</Counter></ActionMain>
                  <ActionCaret $w={33} $line><Caret /></ActionCaret>
                </ActionButton>
              </RepoActions>
            </RepoTop>
            <RepoTabs>
              <RepoTab><GoCode size={16} />Code</RepoTab>
              <RepoTab><GoIssueOpened size={16} />Issues</RepoTab>
              <RepoTab $active><GoGitPullRequest size={16} />Pull requests<Counter>28</Counter></RepoTab>
              <RepoTab><GoPlay size={16} />Actions</RepoTab>
              <RepoTab><GoTable size={16} />Projects</RepoTab>
              <RepoTab><GoShield size={16} />Security</RepoTab>
              <RepoTab><GoGraph size={16} />Insights</RepoTab>
            </RepoTabs>
          </RepoHead>
          <Main>
            <FilterRow>
              <FilterBtn>Filters<GoTriangleDown size={12} color="#57606a" /></FilterBtn>
              <FilterInput><GoSearch size={14} color="#57606a" />is:pr is:open</FilterInput>
              <LabelGroup>
                <LabelPart $w={116} $pl={17}><GoTag size={16} />Labels<Counter>9</Counter></LabelPart>
                <LabelPart $w={146} $pl={17} $line><GoMilestone size={16} />Milestones<Counter>0</Counter></LabelPart>
              </LabelGroup>
              <GreenButton>New pull request</GreenButton>
            </FilterRow>
            <IssueBox>
              <IssueHead>
                <StateLink $on><GoGitPullRequest size={16} />28 Open</StateLink>
                <StateLink><GoCheck size={16} />4 Closed</StateLink>
                <HeadFilters>
                  {["Author", "Label", "Projects", "Milestones", "Reviews", "Assignee", "Sort"].map(t => (
                    <HeadFilter key={t}>{t}<GoTriangleDown size={12} /></HeadFilter>
                  ))}
                </HeadFilters>
              </IssueHead>
              {leftRows.map(([title, meta, link, hover, h]) => (
                <Row key={title} $hover={hover} $h={h}>
                  <PrIcon />
                  <RowBody>
                    <RowTitle>{title}</RowTitle>
                    <RowMeta>{meta}{link && <a>{link}</a>}</RowMeta>
                  </RowBody>
                </Row>
              ))}
            </IssueBox>
          </Main>
        </Doc>
        <Scrollbar $w={17} $gap={0}>
          <ScrollUp $t={7} />
          <ScrollThumb $w={13} $h={173} $top={17} />
          <ScrollDown $b={7} />
        </Scrollbar>
        <HoverCard>
          <Identicon><IdenticonArt /></Identicon>
          <CardName>wallenteen</CardName>
          <CardLine><GoRocket size={16} />Joined GitHub this month</CardLine>
        </HoverCard>
        <Tooltip>Open pull requests created by wallenteen</Tooltip>
        <StatusBar>https://github.com/Bulvinkoln/Test_08.09.2022/issues?q=is%3Apr+is%3Aopen+author%3Awallenteen</StatusBar>
        <Activate><div>Activate Windows</div><div>Go to Settings to activate Windows.</div></Activate>
      </Viewport>
      <Taskbar>
        <TaskSlot $w={48}><WinLogo s={17} /></TaskSlot>
        <TaskSlot $w={48}><TaskView /></TaskSlot>
        <TaskSlot $w={48} $ml={3} $bg="#2d3138" $line><ChromeIcon s={24} /></TaskSlot>
        <TaskSlot $w={42} $ml={5} $line><VsCode s={24} /></TaskSlot>
        <TrayRight $pr={12}>
          <TrayItem $w={24}><ChevronUp size={15} /></TrayItem>
          <TrayItem $w={25}><Plug size={14} /></TrayItem>
          <TrayItem $w={25}><Wifi size={15} style={{ transform: "rotate(45deg)" }} /></TrayItem>
          <TrayItem $w={22}><Volume2 size={16} /></TrayItem>
          <TrayItem $w={36} $fs={12.5}>ENG</TrayItem>
          <TrayItem $w={64}><Clock $lh={18}><span>2:25 PM</span><span>9/13/2022</span></Clock></TrayItem>
          <TrayItem $w={42}><MessageSquare size={18} strokeWidth={1.2} /></TrayItem>
        </TrayRight>
      </Taskbar>
    </LeftDesktop>
  );
}

function RightWindow() {
  return (
    <RightColumn>
      <RightDesktop>
        <TabStrip $big>
          <AppMark><RingMark /></AppMark>
          <Tab $big $w={284} $pl={12} $gap={9} $sep>
            <TabMonitor />
            <TabTitle>«Разработчик» (материалы для</TabTitle>
            <TabClose $w={38}><X size={16} strokeWidth={2.6} /></TabClose>
          </Tab>
          <Tab $big $w={281} $pl={12} $gap={9}>
            <SquareMark $s={20} $c="#fff" $fg="#222" $r={1}>T</SquareMark>
            <TabTitle>telegra.ph</TabTitle>
            <TabClose $w={34}><X size={16} strokeWidth={2.6} /></TabClose>
          </Tab>
          <Tab $big $active $w={285} $pl={14} $gap={9}>
            <GoMarkGithub size={20} color="#24292f" />
            <TabTitle>Pull requests · Bulvinkoln/Test_08.09.2022</TabTitle>
            <TabClose $w={36}><X size={16} strokeWidth={2.6} /></TabClose>
          </Tab>
          <NewTab $w={32} $ml={10}><Plus size={20} strokeWidth={2.4} /></NewTab>
          <WindowControls w={54} s={17} />
        </TabStrip>
        <Toolbar $big>
          <ToolButton $big><ArrowLeft size={21} strokeWidth={2} /></ToolButton>
          <ToolButton $big $dim><ArrowRight size={21} strokeWidth={2} /></ToolButton>
          <ToolButton $big><RotateCw size={19} strokeWidth={2.2} /></ToolButton>
          <ToolButton $big><House size={20} strokeWidth={2} /></ToolButton>
          <Omnibox $big $w={829} $ml={9} $mr={10}>
            <Lock size={14} fill="#5f6368" strokeWidth={2} />
            <Url><b>github.com</b>/Bulvinkoln/Test_08.09.2022/pulls</Url>
            <OmniTool $big><ShareIcon s={19} /></OmniTool>
            <OmniTool $big><Star size={19} strokeWidth={2} /></OmniTool>
          </Omnibox>
          <ToolButton $big><MusicFlame /></ToolButton>
          <ToolButton $big><SquareMark $s={20} $c="#d8d4d2" $fg="#c0392b" $r={6}>Я</SquareMark></ToolButton>
          <ToolButton $big><Dot $s={20} $c="#1e90e8">☁</Dot></ToolButton>
          <ToolButton $big><BoxArrow /></ToolButton>
          <ToolButton $big><Dot $s={20} $c="#f7dcae" /></ToolButton>
          <ToolButton $big><Teal /></ToolButton>
          <ToolButton $big><Dot $s={20} $c="#3a3a3a">VD</Dot></ToolButton>
          <ToolButton $big><Ribbon /></ToolButton>
          <ToolButton $big><Vee /></ToolButton>
          <ToolButton $big><SquareMark $s={20} $c="#e9eaeb" $fg="#fff" $r={4}>✻</SquareMark></ToolButton>
          <ToolButton $big><SquareMark $s={20} $c="#f4632a" $r={5}>◯</SquareMark></ToolButton>
          <ToolButton $big><Dot $s={14} $c="#8f8f8f" /></ToolButton>
          <ToolButton $big><FaPuzzlePiece size={18} /></ToolButton>
          <ToolButton $big><SidePanel s={20} /></ToolButton>
          <ToolButton $big><FaceAvatar $s={25} /></ToolButton>
          <ToolButton $big><EllipsisVertical size={18} strokeWidth={2.6} /></ToolButton>
        </Toolbar>
        <BookmarkRow items={rightMarks} origin={1366} big tail={
          <ChevronsRight size={15} color="#5f6368" style={{ marginLeft: 171 }} />
        } />
        <Viewport>
          <BigDoc>
            <BigBox>
              {rightRows.map(([t, m, f]) => (
                <BigRow key={m} $hover={f === "hover"} $noline={f === "noline"}>
                  <CheckBox />
                  <BigIcon><GoGitPullRequest size={18} /></BigIcon>
                  <div>
                    <BigTitle>{t || "\u00a0"}</BigTitle>
                    <BigMeta>{m}</BigMeta>
                  </div>
                </BigRow>
              ))}
            </BigBox>
            <Pointer width="12" height="18" viewBox="0 0 12 18"><path d="M1 1v14l3.500-3 2.500 5 2-1-2.500-5H11z" fill="#fff" stroke="#222" strokeWidth="1" /></Pointer>
          </BigDoc>
          <Scrollbar $w={18} $gap={0}>
            <ScrollUp $t={8} />
            <ScrollThumb $w={16} $h={299} $top={212} />
            <ScrollDown $b={8} />
          </Scrollbar>
        </Viewport>
        <Taskbar $big>
          <TaskSlot $w={58}><WinLogo s={25} /></TaskSlot>
          <TaskSlot $w={58}><Search size={22} strokeWidth={1.4} style={{ transform: "scaleX(-1)" }} /></TaskSlot>
          <TaskSlot $w={58}><FileExplorer /></TaskSlot>
          <TaskSlot $w={54} $ml={3} $bg="#b9b8ba" $frame><YLogo /></TaskSlot>
          <TaskSlot $w={54} $ml={4} $bg="#b9b8ba" $frame><Dot $s={29} $c="#fc3f1d">Я</Dot></TaskSlot>
          <TaskSlot $w={54} $ml={4} $bg="#c9ad98" $frame>
            <Dot $s={29} $c="#2ea6df"><FaTelegramPlane size={18} /></Dot>
            <CountBadge $r={9} $b={5} $c="#e53935">.20</CountBadge>
          </TaskSlot>
          <TaskSlot $w={54} $ml={4} $bg="#cfcfd1" $frame><ChromeIcon s={30} /></TaskSlot>
          <TaskSlot $w={54} $ml={4} $bg="#b9b8ba" $frame><Pot /></TaskSlot>
          <TaskSlot $w={54} $ml={4} $bg="#b9b8ba" $frame><VsCode s={30} c="#0a7fd9" /></TaskSlot>
          <TaskSlot $w={54} $ml={4} $bg="#b9b8ba" $frame><ZoomTile /></TaskSlot>
          <TrayRight $pr={24}>
            <TrayItem $w={29}><ChevronUp size={17} /></TrayItem>
            <TrayItem $w={29}><Mic size={18} fill="#fff" /></TrayItem>
            <TrayItem $w={29}><Plug size={16} /></TrayItem>
            <TrayItem $w={29}><Wifi size={17} style={{ transform: "rotate(45deg)" }} /></TrayItem>
            <TrayItem $w={29}><Volume2 size={18} /></TrayItem>
            <TrayItem $w={38} $fs={14}>ENG</TrayItem>
            <TrayItem $w={84}><Clock $lh={21}><span>22:00</span><span>08.09.2022</span></Clock></TrayItem>
            <TrayItem $w={44}>
              <MessageSquare size={21} fill="#fff" strokeWidth={1} />
              <CountBadge $round $r={2} $b={6} $c="#1e5fa8">1</CountBadge>
            </TrayItem>
          </TrayRight>
        </Taskbar>
      </RightDesktop>
    </RightColumn>
  );
}

function ChatPanel() {
  return (
    <Chat>
      <ChatHead>Запись чата<X size={20} strokeWidth={1.6} color="#fff" /></ChatHead>
      <ChatList>
        <ChatClip>
          {chat.map(([name, text], i) => (
            <Message key={i}><b>{name}</b>{text}</Message>
          ))}
        </ChatClip>
      </ChatList>
    </Chat>
  );
}

export default function App() {
  return (
    <>
      <Global />
      <Screen>
        <LeftWindow />
        <RightWindow />
        <ChatPanel />
      </Screen>
    </>
  );
}
